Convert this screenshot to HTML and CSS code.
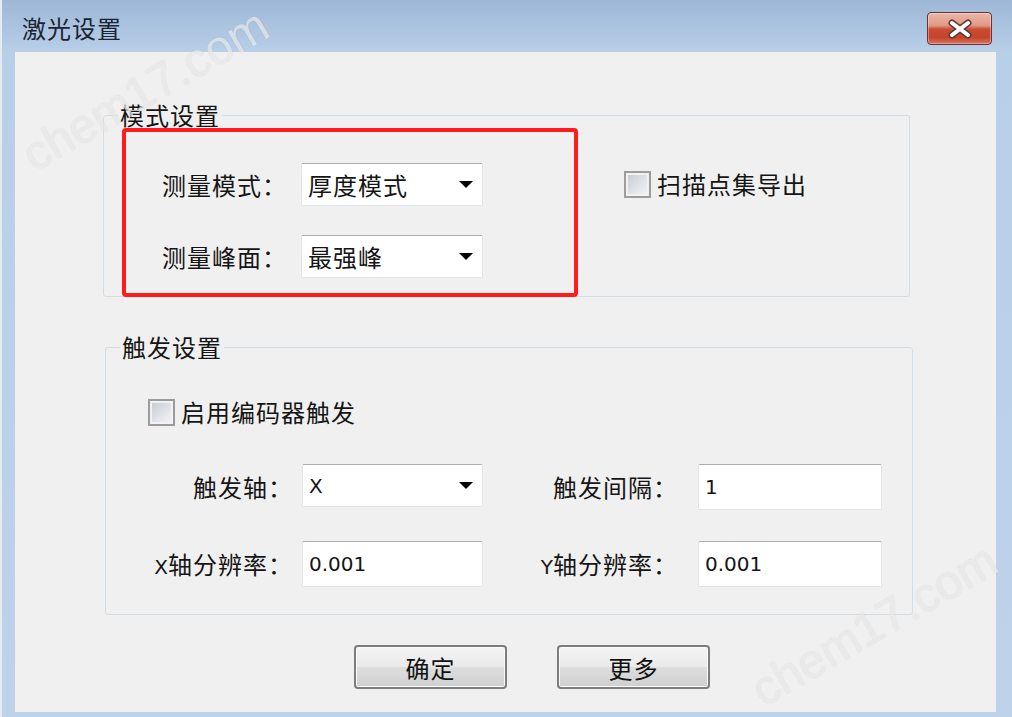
FILE: index.html
```html
<!DOCTYPE html>
<html lang="zh-CN">
<head>
    <meta charset="UTF-8">
    <title>激光设置</title>
    <link rel="stylesheet" href="styles.css">
</head>
<body>
    <div class="window">
        <div class="titlebar">
            <span class="title">激光设置</span>
            <button class="close-btn">
                <svg width="28" height="20" viewBox="0 0 28 20">
                    <path d="M6 4 L22 16 M22 4 L6 16" stroke="#5b3b3b" stroke-width="7" stroke-linecap="round"/>
                    <path d="M6 4 L22 16 M22 4 L6 16" stroke="#ffffff" stroke-width="4" stroke-linecap="round"/>
                </svg>
            </button>
        </div>

        <div class="client">
            <fieldset class="group group-mode">
                <legend>模式设置</legend>
                <div class="mode-row">
                    <div class="highlight">
                        <label class="field-label">测量模式：</label>
                        <div class="combo"><span>厚度模式</span><i class="arrow"></i></div>
                        <label class="field-label">测量峰面：</label>
                        <div class="combo"><span>最强峰</span><i class="arrow"></i></div>
                    </div>
                    <label class="check-item export-check"><span class="check"></span>扫描点集导出</label>
                </div>
            </fieldset>

            <fieldset class="group group-trigger">
                <legend>触发设置</legend>
                <div class="trigger-grid">
                    <label class="check-item encoder-check"><span class="check"></span>启用编码器触发</label>

                    <label class="field-label right-label">触发轴：</label>
                    <div class="combo"><span class="latin">X</span><i class="arrow"></i></div>
                    <label class="field-label right-label wide-pad">触发间隔：</label>
                    <div class="textbox"><span class="latin">1</span></div>

                    <label class="field-label right-label"><span class="latin">X</span>轴分辨率：</label>
                    <div class="textbox"><span class="latin">0.001</span></div>
                    <label class="field-label right-label wide-pad"><span class="latin">Y</span>轴分辨率：</label>
                    <div class="textbox"><span class="latin">0.001</span></div>
                </div>
            </fieldset>

            <div class="buttons">
                <button class="push-btn">确定</button>
                <button class="push-btn">更多</button>
            </div>
        </div>

        <span class="watermark wm-top">chem17.com</span>
        <span class="watermark wm-bottom">chem17.com</span>
    </div>
</body>
</html>
```

FILE: styles.css
```css
* {
    margin: 0;
    padding: 0;
    box-sizing: border-box;
}

body {
    width: 1012px;
    height: 717px;
    overflow: hidden;
    font-family: "Noto Sans CJK SC", sans-serif;
    font-size: 24px;
    color: #151515;
    background-color: #bed3ea;
}

.window {
    position: relative;
    height: 717px;
    overflow: hidden;
    background: linear-gradient(to bottom, #9db7d6 0, #b8cfe8 52px, #bed3ea 100%);
    box-shadow: inset 2px 0 0 #e4ebf3;
}

/* title bar */
.titlebar {
    height: 52px;
    display: flex;
    justify-content: space-between;
    align-items: flex-start;
    padding: 0 20px 0 22px;
}

.title {
    margin-top: 16px;
    line-height: 24px;
    letter-spacing: 1px;
    color: #1b2433;
}

.close-btn {
    margin-top: 12px;
    width: 65px;
    height: 33px;
    border: 1px solid #6a3034;
    border-radius: 4px;
    background: linear-gradient(to bottom, #ebb6a8 0%, #e09a86 40%, #cc4c33 52%, #c4432a 78%, #d9745a 100%);
    box-shadow: inset 0 0 0 1px rgba(255, 255, 255, 0.35);
    display: flex;
    align-items: center;
    justify-content: center;
}

/* client area */
.client {
    margin: 0 16px 0 15px;
    height: 660px;
    background-color: #f0f0f0;
    padding-top: 49px;
}

.group {
    border: 1px solid #d3dde6;
    border-radius: 3px;
    padding: 0;
}

.group legend {
    margin-left: 14px;
    padding: 0 2px;
    line-height: 28px;
    letter-spacing: 1px;
}

.group-mode {
    margin-left: 88px;
    width: 807px;
}

.mode-row {
    display: flex;
    align-items: flex-start;
    padding-left: 18px;
}

.highlight {
    margin: -1px 0 -1px 0;
    width: 456px;
    height: 169px;
    border: 4px solid #ff1c1c;
    border-radius: 4px;
    display: grid;
    grid-template-columns: 139px 182px;
    align-content: start;
    row-gap: 29px;
    padding: 31px 0 0 36px;
}

.field-label {
    line-height: 43px;
    letter-spacing: 1px;
    white-space: nowrap;
}

.latin {
    font-family: "DejaVu Sans", sans-serif;
    font-size: 20px;
    letter-spacing: 0;
}

.combo {
    height: 43px;
    background-color: #fff;
    border: 1px solid #e2e4ea;
    border-top-color: #abadb3;
    border-radius: 2px;
    display: flex;
    align-items: center;
    padding: 0 9px 0 6px;
    line-height: 1;
    letter-spacing: 1px;
}

.arrow {
    margin-left: auto;
    width: 0;
    height: 0;
    border-left: 7px solid transparent;
    border-right: 7px solid transparent;
    border-top: 7px solid #000;
}

.textbox {
    height: 46px;
    background-color: #fff;
    border: 1px solid #e2e4ea;
    border-top-color: #abadb3;
    border-radius: 2px;
    display: flex;
    align-items: center;
    padding-left: 6px;
    line-height: 1;
}

.check-item {
    display: flex;
    align-items: center;
    gap: 6px;
    line-height: 28px;
    letter-spacing: 1px;
}

.check {
    width: 27px;
    height: 27px;
    border: 2px solid #9c9c9c;
    background: linear-gradient(135deg, #c4c9d2, #eceef1 80%);
    box-shadow: inset 0 0 0 2px #f2f2f2;
}

.export-check {
    margin: 41px 0 0 46px;
}

.group-trigger {
    margin: 36px 0 0 90px;
    width: 808px;
}

.trigger-grid {
    display: grid;
    grid-template-columns: 196px 181px 215px 184px;
    align-items: start;
    row-gap: 31px;
    padding: 37px 0 24px 0;
}

.encoder-check {
    grid-column: 1 / -1;
    padding-left: 42px;
    margin-bottom: 7px;
}

.right-label {
    text-align: right;
    line-height: 46px;
    padding-right: 9px;
}

.right-label.wide-pad {
    padding-right: 20px;
}

/* bottom buttons */
.buttons {
    display: flex;
    gap: 50px;
    margin-top: 30px;
    padding-left: 339px;
}

.push-btn {
    width: 153px;
    height: 44px;
    font-family: "Noto Sans CJK SC", sans-serif;
    font-size: 24px;
    letter-spacing: 1px;
    color: #111;
    border: 2px solid #7d7d7d;
    border-radius: 4px;
    background: linear-gradient(to bottom, #f3f3f3 0%, #ebebeb 48%, #dddddd 52%, #d0d0d0 100%);
    box-shadow: inset 0 0 0 1px #fbfbfb;
}

/* site watermark stamped on the screenshot */
.watermark {
    position: absolute;
    font-family: "Liberation Sans", sans-serif;
    font-size: 48px;
    line-height: 56px;
    color: rgba(255, 255, 255, 0.6);
    text-shadow: 0 0 1px rgba(110, 110, 110, 0.3);
    transform: rotate(-30deg);
    white-space: nowrap;
}

.wm-top {
    left: 8px;
    top: 62px;
}

.wm-bottom {
    left: 737px;
    top: 597px;
}
```
